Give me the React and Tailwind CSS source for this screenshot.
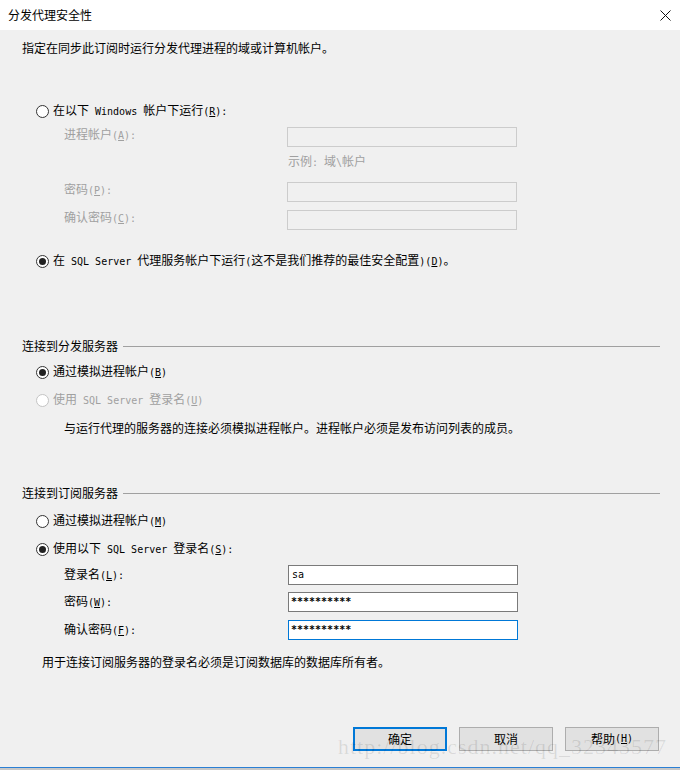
import React from "react";

// latin runs in the dialog font are half-width (6px), so set them in a mono face
function M({ children, className = "" }) {
  return (
    <span className={`font-['DejaVu_Sans_Mono'] text-[10px] whitespace-pre ${className}`}>
      {children}
    </span>
  );
}

function Radio({ checked, disabled }) {
  return (
    <span
      className={`w-[13px] h-[13px] rounded-full border flex items-center justify-center shrink-0 ${
        disabled ? "border-[#c4c4c4] bg-white" : "border-[#333333] bg-white"
      }`}
    >
      {checked && <span className="w-[7px] h-[7px] rounded-full bg-[#222222]" />}
    </span>
  );
}

function RadioRow({ checked, disabled, mt, children }) {
  return (
    <div className={`flex items-center h-4 pl-[14px] gap-[4px] ${mt}`}>
      <Radio checked={checked} disabled={disabled} />
      <span className={disabled ? "text-[#a0a0a0]" : "text-black"}>{children}</span>
    </div>
  );
}

function Button({ primary, children }) {
  return (
    <button
      className={`w-[94px] h-[24px] bg-[#e1e1e1] text-[12px] text-black flex items-center justify-center ${
        primary ? "border-2 border-[#0078d7]" : "border border-[#adadad]"
      }`}
    >
      {children}
    </button>
  );
}

export default function App() {
  return (
    <div className="w-full h-[770px] overflow-hidden relative flex flex-col bg-[#f0f0f0] text-[12px] leading-4 text-black font-['Noto_Sans_CJK_SC',sans-serif]">
      {/* title bar */}
      <div className="h-[30px] bg-white flex items-center justify-between pl-[8px] pr-[9px] shrink-0">
        <span>分发代理安全性</span>
        <svg width="11" height="11" viewBox="0 0 11 11">
          <path d="M0.5 0.5 L10.5 10.5 M10.5 0.5 L0.5 10.5" stroke="#111" strokeWidth="1" />
        </svg>
      </div>

      <div className="flex-1 flex flex-col pl-[22px]">
        <div className="mt-[10px] h-4">指定在同步此订阅时运行分发代理进程的域或计算机帐户。</div>

        <RadioRow mt="mt-[47px]">
          在以下<M> Windows </M>帐户下运行<M>(<u>R</u>):</M>
        </RadioRow>

        {/* windows account fields (disabled) */}
        <div className="flex items-start mt-[7px] text-[#a0a0a0]">
          <span className="ml-[42px] w-[223px] h-4">
            进程帐户<M>(<u>A</u>):</M>
          </span>
          <div className="mt-[1px] w-[230px] h-[20px] border border-[#cccccc] bg-[#f0f0f0]" />
        </div>
        <div className="mt-[6px] h-4 ml-[266px] text-[#a0a0a0]">
          示例<M>: </M>域<M>\</M>帐户
        </div>
        <div className="flex items-start mt-[12px] text-[#a0a0a0]">
          <span className="ml-[42px] w-[223px] h-4">
            密码<M>(<u>P</u>):</M>
          </span>
          <div className="mt-[1px] w-[230px] h-[20px] border border-[#cccccc] bg-[#f0f0f0]" />
        </div>
        <div className="flex items-start mt-[7px] text-[#a0a0a0]">
          <span className="ml-[42px] w-[223px] h-4">
            确认密码<M>(<u>C</u>):</M>
          </span>
          <div className="mt-[1px] w-[230px] h-[20px] border border-[#cccccc] bg-[#f0f0f0]" />
        </div>

        <RadioRow checked mt="mt-[23px]">
          在<M> SQL Server </M>代理服务帐户下运行<M>(</M>这不是我们推荐的最佳安全配置<M>)(<u>D</u>)</M>。
        </RadioRow>

        {/* distributor */}
        <div className="flex items-center h-4 mt-[69px] pr-[20px]">
          <span>连接到分发服务器</span>
          <div className="flex-1 h-px bg-[#a0a0a0] ml-[5px]" />
        </div>
        <RadioRow checked mt="mt-[10px]">
          通过模拟进程帐户<M>(<u>B</u>)</M>
        </RadioRow>
        <RadioRow disabled mt="mt-[12px]">
          使用<M> SQL Server </M>登录名<M>(<u>U</u>)</M>
        </RadioRow>
        <div className="mt-[12px] h-4 ml-[42px]">
          与运行代理的服务器的连接必须模拟进程帐户。进程帐户必须是发布访问列表的成员。
        </div>

        {/* subscriber */}
        <div className="flex items-center h-4 mt-[49px] pr-[20px]">
          <span>连接到订阅服务器</span>
          <div className="flex-1 h-px bg-[#a0a0a0] ml-[5px]" />
        </div>
        <RadioRow mt="mt-[12px]">
          通过模拟进程帐户<M>(<u>M</u>)</M>
        </RadioRow>
        <RadioRow checked mt="mt-[12px]">
          使用以下<M> SQL Server </M>登录名<M>(<u>S</u>):</M>
        </RadioRow>

        <div className="flex items-center mt-[8px]">
          <span className="ml-[42px] w-[224px]">
            登录名<M>(<u>L</u>):</M>
          </span>
          <div className="w-[230px] h-[20px] border border-[#7a7a7a] bg-white flex items-center pl-[3px]">
            <M>sa</M>
          </div>
        </div>
        <div className="flex items-center mt-[7px]">
          <span className="ml-[42px] w-[224px]">
            密码<M>(<u>W</u>):</M>
          </span>
          <div className="w-[230px] h-[20px] border border-[#7a7a7a] bg-white flex items-center pl-[2px]">
            <M className="font-bold">**********</M>
          </div>
        </div>
        <div className="flex items-center mt-[8px]">
          <span className="ml-[42px] w-[224px]">
            确认密码<M>(<u>F</u>):</M>
          </span>
          <div className="w-[230px] h-[20px] border border-[#0078d7] bg-white flex items-center pl-[2px]">
            <M className="font-bold">**********</M>
          </div>
        </div>

        <div className="mt-[14px] h-4 ml-[20px]">
          用于连接订阅服务器的登录名必须是订阅数据库的数据库所有者。
        </div>

        <div className="mt-[57px] flex justify-end gap-[12px] pr-[21px]">
          <Button primary>确定</Button>
          <Button>取消</Button>
          <Button>
            帮助<M>(<u>H</u>)</M>
          </Button>
        </div>
        <div className="flex-1" />
      </div>

      <div className="h-px bg-[#2b7fd4] shrink-0" />
      <div className="h-[2px] bg-[#c8c8c8] shrink-0" />

      {/* watermark over the buttons */}
      <div className="absolute left-[338px] top-[734px] text-[22px] leading-[26px] tracking-[1px] text-black/10 font-['Liberation_Serif',serif] pointer-events-none whitespace-nowrap">
        http://blog.csdn.net/qq_32343577
      </div>
    </div>
  );
}
